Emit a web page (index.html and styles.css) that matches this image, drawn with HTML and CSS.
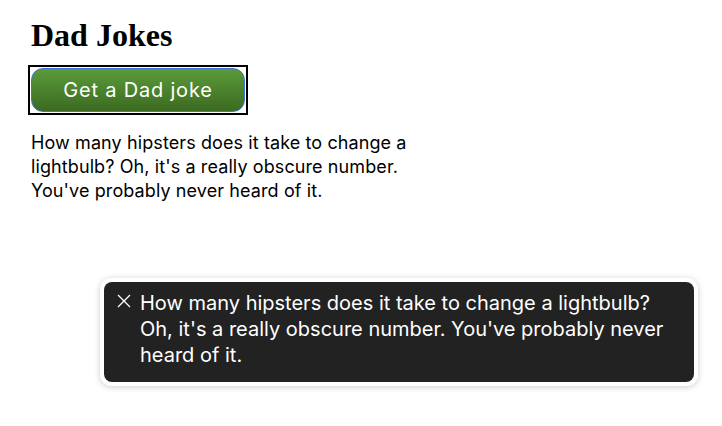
FILE: index.html
```html
<!DOCTYPE html>
<html lang="en">
<head>
<meta charset="utf-8">
<title>Dad Jokes</title>
<link rel="stylesheet" href="styles.css">
</head>
<body>
<main class="page">
  <h1 class="title">Dad Jokes</h1>
  <div class="focus-ring"><button class="joke-btn" type="button">Get a Dad joke</button></div>
  <p class="joke">How many hipsters does it take to change a lightbulb? Oh, it's a really obscure number. You've probably never heard of it.</p>
</main>
<div class="toast" role="status">
  <div class="toast-inner">
    <svg class="toast-close" width="14" height="14" viewBox="0 0 14 14" aria-hidden="true"><path d="M1 1L13 13M13 1L1 13" stroke="#fff" stroke-width="1.3" fill="none"/></svg>
    <p class="toast-text">How many hipsters does it take to change a lightbulb? Oh, it's a really obscure number. You've probably never heard of it.</p>
  </div>
</div>
</body>
</html>
```
FILE: styles.css
```css
html, body {
  margin: 0;
  padding: 0;
  background: #fff;
}
body {
  font-family: Inter, "Liberation Sans", Arial, sans-serif;
  color: #000;
}
.page {
  padding: 17px 0 0 31px;
}
.title {
  font-family: "Liberation Serif", "Times New Roman", serif;
  font-size: 32px;
  font-weight: bold;
  margin: 0 0 11px;
  line-height: 37px;
}
.focus-ring {
  display: inline-block;
  margin-left: -3px;
  border: 2px solid #000;
  padding: 1px;
}
.joke-btn {
  display: block;
  box-sizing: border-box;
  width: 214px;
  height: 44px;
  margin: 0;
  border: 1px solid #3f72d8;
  border-radius: 12px;
  background: linear-gradient(#5b9b3a, #3c6a21);
  color: #fff;
  font-family: Inter, "Liberation Sans", Arial, sans-serif;
  font-size: 20px;
  letter-spacing: 0.8px;
  padding: 0;
}
.joke {
  margin: 16px 0 0;
  width: 390px;
  font-size: 18px;
  letter-spacing: 0.1px;
  line-height: 24px;
}
.toast {
  position: absolute;
  left: 100px;
  top: 278px;
  width: 598px;
  box-sizing: border-box;
  padding: 4px;
  background: #fff;
  border-radius: 11px;
  box-shadow: 0 1px 6px rgba(0, 0, 0, 0.2);
}
.toast-inner {
  display: flex;
  align-items: flex-start;
  gap: 9px;
  background: #222;
  border-radius: 8px;
  padding: 8px 20px 14px 13px;
  height: 100px;
  box-sizing: border-box;
}
.toast-close {
  flex: none;
  margin-top: 4px;
}
.toast-text {
  margin: 0;
  color: #fff;
  font-size: 20px;
  line-height: 26px;
}
```
